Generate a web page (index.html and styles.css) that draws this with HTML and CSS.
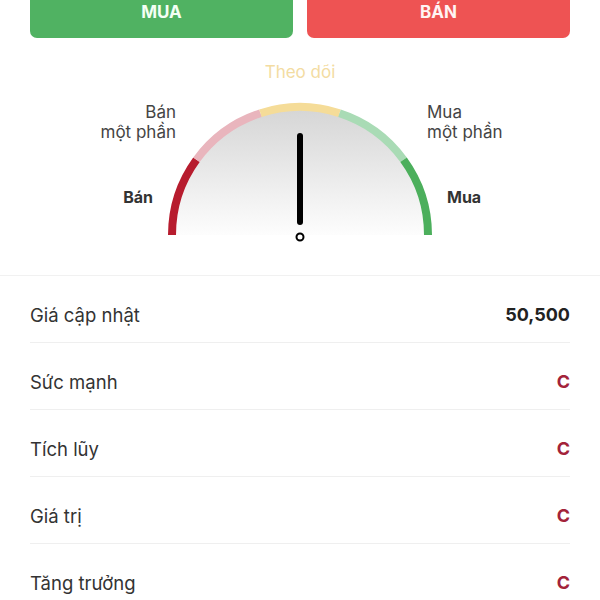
FILE: index.html
```html
<!DOCTYPE html>
<html lang="vi">
<head>
  <meta charset="UTF-8">
  <title>Khuyến nghị</title>
  <link rel="stylesheet" href="styles.css">
</head>
<body>
  <div class="actions">
    <button class="btn buy">MUA</button>
    <button class="btn sell">BÁN</button>
  </div>

  <div class="gauge">
    <svg class="dial" width="600" height="237" viewBox="0 0 600 237">
      <defs>
        <linearGradient id="face" x1="0" y1="0" x2="0" y2="1">
          <stop offset="0" stop-color="#d5d5d5"/>
          <stop offset="1" stop-color="#fdfdfd"/>
        </linearGradient>
      </defs>
      <text class="lbl watch" x="300" y="40" text-anchor="middle">Theo dõi</text>
      <text class="lbl" x="176" y="80" text-anchor="end">Bán</text>
      <text class="lbl" x="176" y="100" text-anchor="end">một phần</text>
      <text class="lbl" x="427" y="80">Mua</text>
      <text class="lbl" x="427" y="100">một phần</text>
      <text class="lbl strong" x="153" y="165" text-anchor="end">Bán</text>
      <text class="lbl strong" x="447" y="165">Mua</text>

      <path d="M172 197 A128 128 0 0 1 428 197 Z" fill="url(#face)"/>
      <g fill="none" stroke-width="8">
        <path d="M172 197 A128 128 0 0 1 196.45 121.76" stroke="#b71c2e"/>
        <path d="M196.45 121.76 A128 128 0 0 1 260.45 75.26" stroke="#e9b5bd"/>
        <path d="M260.45 75.26 A128 128 0 0 1 339.55 75.26" stroke="#f5dc98"/>
        <path d="M339.55 75.26 A128 128 0 0 1 403.55 121.76" stroke="#a9dbb5"/>
        <path d="M403.55 121.76 A128 128 0 0 1 428 197" stroke="#4caf5c"/>
      </g>

      <line x1="300" y1="98" x2="300" y2="184" stroke="#000" stroke-width="6" stroke-linecap="round"/>
      <circle cx="300" cy="199" r="3.5" fill="#fff" stroke="#000" stroke-width="2"/>
    </svg>
  </div>

  <div class="stats">
    <div class="row"><span class="name">Giá cập nhật</span><span class="val">50,500</span></div>
    <div class="row"><span class="name">Sức mạnh</span><span class="val grade">C</span></div>
    <div class="row"><span class="name">Tích lũy</span><span class="val grade">C</span></div>
    <div class="row"><span class="name">Giá trị</span><span class="val grade">C</span></div>
    <div class="row"><span class="name">Tăng trưởng</span><span class="val grade">C</span></div>
  </div>
</body>
</html>
```

FILE: styles.css
```css
body { margin: 0; background: #fff; font-family: Inter, Roboto, "Liberation Sans", sans-serif; color: #333; overflow: hidden; }

.actions { display: grid; grid-template-columns: 1fr 1fr; gap: 14px; padding: 0 30px; margin-top: -8px; }
.btn { height: 46px; border: 0; border-radius: 7px; padding: 8px 0 14px; font: 700 17px/24px Inter, Roboto, "Liberation Sans", sans-serif; color: #f4fff4; }
.buy { background: #50b262; }
.sell { background: #ee5353; color: #fff4f4; }

.gauge { border-bottom: 1px solid #f1f1f1; }
.dial { display: block; }
.lbl { font-family: Inter, Roboto, "Liberation Sans", sans-serif; font-size: 17px; fill: #444; }
.watch { fill: #f3dca2; }
.strong { font-size: 16px; font-weight: 700; fill: #333; }

.stats { padding: 0 30px; }
.row { display: flex; justify-content: space-between; padding: 27px 0 15px; line-height: 24px; font-size: 18.5px; border-bottom: 1px solid #efefef; }
.val { font-size: 18px; font-weight: 700; color: #222; }
.grade { color: #a3233a; }
```
